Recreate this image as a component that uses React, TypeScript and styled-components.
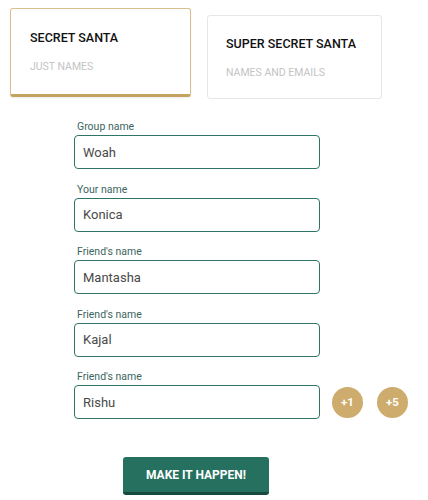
import styled, { createGlobalStyle } from 'styled-components'

const Global = createGlobalStyle`
  body {
    margin: 0;
    background: #fff;
    font-family: Roboto, "Liberation Sans", sans-serif;
  }
`

const Page = styled.div`
  width: 428px;
  height: 500px;
  box-sizing: border-box;
  padding: 8px 0 0 10px;
`

const Modes = styled.div`
  display: flex;
  align-items: flex-start;
  gap: 16px;
`

const ModeCard = styled.div<{ $active?: boolean }>`
  box-sizing: border-box;
  width: ${(p) => (p.$active ? '181px' : '175px')};
  height: ${(p) => (p.$active ? '89px' : '84px')};
  margin-top: ${(p) => (p.$active ? '0' : '7px')};
  padding: ${(p) => (p.$active ? '21px 0 0 19px' : '20px 0 0 18px')};
  border: 1px solid ${(p) => (p.$active ? '#d9c08e' : '#e6e6e6')};
  border-bottom: ${(p) => (p.$active ? '3px solid #c5a35e' : '1px solid #e6e6e6')};
  border-radius: 3px;
  background: #fff;
  box-shadow: ${(p) => (p.$active ? '0 1px 2px rgba(0,0,0,0.08)' : 'none')};
`

const ModeTitle = styled.div`
  font-size: 12.5px;
  font-weight: 500;
  color: #111;
  line-height: 15px;
`

const ModeSub = styled.div`
  margin-top: 15px;
  font-size: 10.5px;
  font-weight: 400;
  color: #c4c4c4;
  line-height: 13px;
`

const Form = styled.div`
  display: flex;
  flex-direction: column;
  gap: 13.5px;
  margin: 21px 0 0 64px;
`

const Field = styled.div`
  display: flex;
  flex-direction: column;
  gap: 2px;
`

const Label = styled.label`
  padding-left: 3px;
  font-size: 10.5px;
  color: #3c6560;
  line-height: 13px;
`

const Row = styled.div`
  display: flex;
  align-items: center;
`

const Input = styled.input`
  box-sizing: border-box;
  width: 246px;
  height: 34px;
  padding: 0 8px;
  border: 1px solid #2e7566;
  border-radius: 4px;
  font-family: Roboto, "Liberation Sans", sans-serif;
  font-size: 13px;
  color: #4a4a4a;
  background: #fff;
  outline: none;
`

const Plus = styled.button<{ $gap: number }>`
  width: 31px;
  height: 31px;
  margin-left: ${(p) => p.$gap}px;
  border: none;
  border-radius: 50%;
  background: #cdac6d;
  color: #fff;
  font-family: Roboto, "Liberation Sans", sans-serif;
  font-size: 11.5px;
  font-weight: 700;
  padding: 0;
`

const Submit = styled.button`
  display: block;
  width: 146px;
  height: 38px;
  margin: 38px 0 0 113px;
  border: none;
  border-bottom: 3px solid #18493f;
  border-radius: 3px;
  background: #26705f;
  color: #fff;
  font-family: Roboto, "Liberation Sans", sans-serif;
  font-size: 12px;
  font-weight: 700;
  padding: 0;
`

const fields = [
  { label: 'Group name', value: 'Woah' },
  { label: 'Your name', value: 'Konica' },
  { label: "Friend's name", value: 'Mantasha' },
  { label: "Friend's name", value: 'Kajal' },
]

export default function App() {
  return (
    <Page>
      <Global />
      <Modes>
        <ModeCard $active>
          <ModeTitle>SECRET SANTA</ModeTitle>
          <ModeSub>JUST NAMES</ModeSub>
        </ModeCard>
        <ModeCard>
          <ModeTitle>SUPER SECRET SANTA</ModeTitle>
          <ModeSub>NAMES AND EMAILS</ModeSub>
        </ModeCard>
      </Modes>
      <Form>
        {fields.map((f, i) => (
          <Field key={i}>
            <Label>{f.label}</Label>
            <Input defaultValue={f.value} />
          </Field>
        ))}
        <Field>
          <Label>Friend's name</Label>
          <Row>
            <Input defaultValue="Rishu" />
            <Plus $gap={12}>+1</Plus>
            <Plus $gap={14}>+5</Plus>
          </Row>
        </Field>
      </Form>
      <Submit>MAKE IT HAPPEN!</Submit>
    </Page>
  )
}
